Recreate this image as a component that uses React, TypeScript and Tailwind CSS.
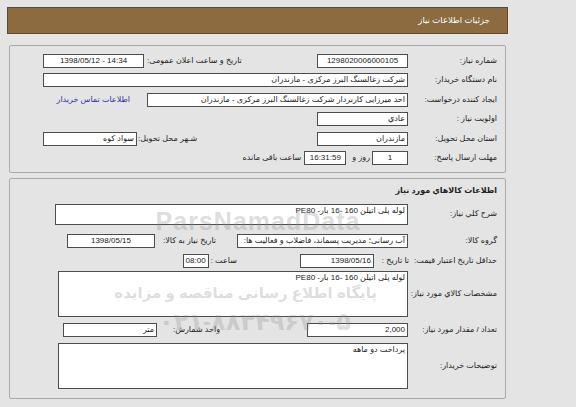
import React from 'react';

const font = { fontFamily: '"Liberation Sans", "DejaVu Sans", sans-serif' };

const Box: React.FC<{ w: string; center?: boolean; ltr?: boolean; children?: React.ReactNode }> = ({ w, center, ltr, children }) => (
  <div
    dir={ltr ? 'ltr' : undefined}
    className={`${w} h-[14px] shrink-0 bg-white border border-[#4d4d4d] flex items-center px-[2px] leading-none whitespace-nowrap overflow-hidden ${center ? 'justify-center' : ''}`}
  >
    {children}
  </div>
);

const Area: React.FC<{ w: string; h: string; children?: React.ReactNode }> = ({ w, h, children }) => (
  <div className={`${w} ${h} shrink-0 bg-white border border-[#4d4d4d] px-[2px] pt-[2px] leading-none whitespace-nowrap`}>
    {children}
  </div>
);

const Label: React.FC<{ children: React.ReactNode }> = ({ children }) => (
  <span className="w-[89px] shrink-0 whitespace-nowrap">{children}</span>
);

export default function App() {
  return (
    <div className="relative w-[576px] h-[407px] bg-[#e4e4e4] overflow-hidden text-[8px] text-[#222]" style={font}>
      <div dir="rtl" className="ml-[7px] pt-[7px] w-[501px]">
        {/* header */}
        <div className="h-[27px] bg-[#8b6b3f] border border-[#5c4a2e] flex items-center pr-[17px] text-white text-[8.5px]">
          جزئیات اطلاعات نیاز
        </div>

        {/* panel 1 */}
        <div className="mx-[2px] mt-[11px] border border-[#a9a9a9] rounded-[2px] pt-[8px] pb-[7px] flex flex-col gap-[5.4px]">
          <div className="flex h-[14px] items-center justify-between pr-[8px] pl-[33px]">
            <div className="flex items-center">
              <Label>شماره نیاز:</Label>
              <Box w="w-[91px]" center ltr>1298020006000105</Box>
            </div>
            <div className="flex items-center gap-[3px]">
              <span className="whitespace-nowrap">تاریخ و ساعت اعلان عمومی:</span>
              <Box w="w-[101px]" center ltr>1398/05/12 - 14:34</Box>
            </div>
          </div>
          <div className="flex h-[14px] items-center pr-[8px]">
            <Label>نام دستگاه خریدار:</Label>
            <Box w="w-[365px]">شرکت زغالسنگ البرز مرکزی - مازندران</Box>
          </div>
          <div className="flex h-[14px] items-center pr-[8px]">
            <Label>ایجاد کننده درخواست:</Label>
            <Box w="w-[261px]">احد میرزایی کاربردار شرکت زغالسنگ البرز مرکزی - مازندران</Box>
            <span className="mr-[17px] whitespace-nowrap text-[#2f2fa0]">اطلاعات تماس خریدار</span>
          </div>
          <div className="flex h-[14px] items-center pr-[8px]">
            <Label>اولویت نیاز :</Label>
            <Box w="w-[91px]">عادي</Box>
          </div>
          <div className="flex h-[14px] items-center justify-between pr-[8px] pl-[33px]">
            <div className="flex items-center">
              <Label>استان محل تحویل:</Label>
              <Box w="w-[91px]">مازندران</Box>
            </div>
            <div className="flex items-center gap-[1px]">
              <span className="whitespace-nowrap">شـهر محل تحویل:</span>
              <Box w="w-[94px]">سواد کوه</Box>
            </div>
          </div>
          <div className="flex h-[14px] items-center pr-[8px]">
            <Label>مهلت ارسال پاسخ:</Label>
            <Box w="w-[36px]" center>1</Box>
            <span className="mr-[2px] whitespace-nowrap">روز و</span>
            <div className="mr-[6px]">
              <Box w="w-[42px]" center ltr>16:31:59</Box>
            </div>
            <span className="mr-[3px] whitespace-nowrap">ساعت باقی مانده</span>
          </div>
        </div>

        {/* panel 2 */}
        <div className="mx-[2px] mt-[5px] border border-[#a9a9a9] rounded-[2px] pt-[6px] pb-[9px] pr-[8px]">
          <div className="h-[12px] flex items-center font-bold">اطلاعات کالاهاي مورد نیاز</div>

          <div className="mt-[7px] flex items-center">
            <Label>شرح کلي نیاز:</Label>
            <Area w="w-[353px]" h="h-[21px]">لوله پلی اتیلن 160 -16 بار- PE80</Area>
          </div>

          <div className="mt-[9px] h-[14px] flex items-center justify-between pl-[57px]">
            <div className="flex items-center">
              <Label>گروه کالا:</Label>
              <Box w="w-[171px]">آب رسانی؛ مدیریت پسماند، فاضلاب و فعالیت ها:</Box>
            </div>
            <div className="flex items-center gap-[8px]">
              <span className="whitespace-nowrap">تاریخ نیاز به کالا:</span>
              <Box w="w-[88px]" center ltr>1398/05/15</Box>
            </div>
          </div>

          <div className="mt-[6px] h-[14px] flex items-center">
            <span className="whitespace-nowrap">حداقل تاریخ اعتبار قیمت:</span>
            <span className="mr-[5px] whitespace-nowrap">تا تاریخ :</span>
            <div className="mr-[8px]">
              <Box w="w-[74px]">1398/05/16</Box>
            </div>
            <span className="mr-[63px] whitespace-nowrap">ساعت :</span>
            <div className="mr-[2px]">
              <Box w="w-[26px]" center ltr>08:00</Box>
            </div>
          </div>

          <div className="mt-[3px] flex items-center">
            <Label>مشخصات کالاي مورد نیاز:</Label>
            <Area w="w-[350px]" h="h-[46px]">لوله پلی اتیلن 160 -16 بار- PE80</Area>
          </div>

          <div className="mt-[6px] h-[14px] flex items-center justify-between pl-[53px]">
            <div className="flex items-center">
              <Label>تعداد / مقدار مورد نیاز:</Label>
              <Box w="w-[101px]">2,000</Box>
            </div>
            <div className="flex items-center gap-[16px]">
              <span className="whitespace-nowrap">واحد شمارش:</span>
              <Box w="w-[94px]">متر</Box>
            </div>
          </div>

          <div className="mt-[6px] flex items-center">
            <Label>توضیحات خریدار:</Label>
            <Area w="w-[350px]" h="h-[46px]">پرداخت دو ماهه</Area>
          </div>
        </div>
      </div>

      {/* watermark */}
      <div className="pointer-events-none absolute inset-0 text-[#8c8c8c]/30">
        <div className="absolute left-[140px] top-[209px] w-[236px] text-center text-[25px] font-bold leading-none tracking-[1px]" style={{ fontFamily: '"Liberation Sans", sans-serif' }}>
          ParsNamadData
        </div>
        <div dir="rtl" className="absolute left-[137px] top-[285px] w-[240px] text-center text-[15px] font-bold leading-none whitespace-nowrap">
          پایگاه اطلاع رسانی مناقصه و مزایده
        </div>
        <div dir="ltr" className="absolute left-[150px] top-[310px] w-[210px] text-center text-[24px] font-bold leading-none whitespace-nowrap">
          ۰۲۱-۸۸۳۴۹۶۷۰-۵
        </div>
      </div>
    </div>
  );
}
